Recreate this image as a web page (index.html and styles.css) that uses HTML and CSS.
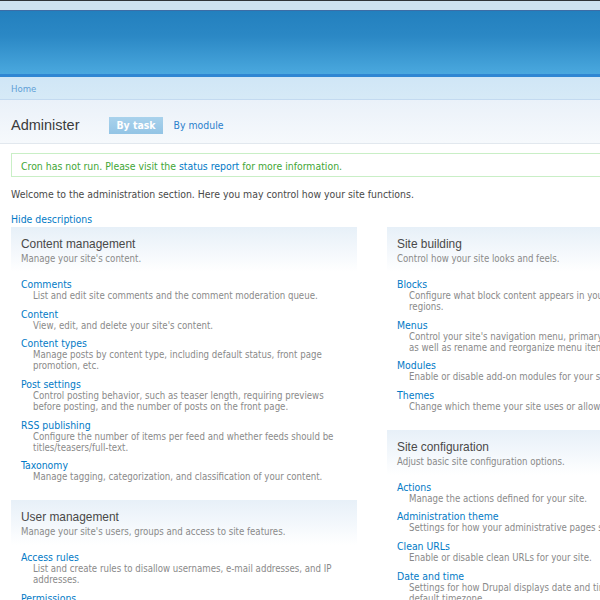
FILE: index.html
```html
<!DOCTYPE html>
<html>
<head>
<meta charset="utf-8">
<title>Administer</title>
<link rel="stylesheet" href="styles.css">
</head>
<body>
<div class="page">
  <div class="topstrip"></div>
  <div class="header"></div>
  <div class="crumbs"><a href="#">Home</a></div>
  <div class="titlebar">
    <h2 class="title">Administer</h2>
    <ul class="tabs">
      <li class="active"><a href="#">By task</a></li>
      <li><a href="#">By module</a></li>
    </ul>
  </div>
  <div class="content">
    <div class="messages">Cron has not run. Please visit the <a href="#">status report</a> for more information.</div>
    <p class="welcome">Welcome to the administration section. Here you may control how your site functions.</p>
    <p class="compact"><a href="#">Hide descriptions</a></p>
    <div class="columns">
      <div class="col">
        <div class="panel">
          <h3>Content management</h3>
          <div class="desc">Manage your site's content.</div>
          <dl>
            <dt><a href="#">Comments</a></dt>
            <dd>List and edit site comments and the comment moderation queue.</dd>
            <dt><a href="#">Content</a></dt>
            <dd>View, edit, and delete your site's content.</dd>
            <dt><a href="#">Content types</a></dt>
            <dd>Manage posts by content type, including default status, front page promotion, etc.</dd>
            <dt><a href="#">Post settings</a></dt>
            <dd>Control posting behavior, such as teaser length, requiring previews before posting, and the number of posts on the front page.</dd>
            <dt><a href="#">RSS publishing</a></dt>
            <dd>Configure the number of items per feed and whether feeds should be titles/teasers/full-text.</dd>
            <dt><a href="#">Taxonomy</a></dt>
            <dd>Manage tagging, categorization, and classification of your content.</dd>
          </dl>
        </div>
        <div class="panel">
          <h3>User management</h3>
          <div class="desc">Manage your site's users, groups and access to site features.</div>
          <dl>
            <dt><a href="#">Access rules</a></dt>
            <dd>List and create rules to disallow usernames, e-mail addresses, and IP addresses.</dd>
            <dt><a href="#">Permissions</a></dt>
            <dd>Determine access to features by selecting permissions for roles.</dd>
          </dl>
        </div>
      </div>
      <div class="col">
        <div class="panel">
          <h3>Site building</h3>
          <div class="desc">Control how your site looks and feels.</div>
          <dl>
            <dt><a href="#">Blocks</a></dt>
            <dd>Configure what block content appears in your site's sidebars and other regions.</dd>
            <dt><a href="#">Menus</a></dt>
            <dd>Control your site's navigation menu, primary links and secondary links, as well as rename and reorganize menu items.</dd>
            <dt><a href="#">Modules</a></dt>
            <dd>Enable or disable add-on modules for your site.</dd>
            <dt><a href="#">Themes</a></dt>
            <dd>Change which theme your site uses or allows users to set.</dd>
          </dl>
        </div>
        <div class="panel">
          <h3>Site configuration</h3>
          <div class="desc">Adjust basic site configuration options.</div>
          <dl>
            <dt><a href="#">Actions</a></dt>
            <dd>Manage the actions defined for your site.</dd>
            <dt><a href="#">Administration theme</a></dt>
            <dd>Settings for how your administrative pages should look.</dd>
            <dt><a href="#">Clean URLs</a></dt>
            <dd>Enable or disable clean URLs for your site.</dd>
            <dt><a href="#">Date and time</a></dt>
            <dd>Settings for how Drupal displays date and time, as well as the system's default timezone.</dd>
          </dl>
        </div>
      </div>
    </div>
  </div>
</div>
</body>
</html>
```
FILE: styles.css
```css
html, body {
  margin: 0;
  padding: 0;
  overflow: hidden;
  background: #fff;
}
body {
  font-family: "DejaVu Sans Condensed", "DejaVu Sans", sans-serif;
  font-size: 10.4px;
  color: #494949;
}
a {
  color: #027ac6;
  text-decoration: none;
}
.page {
  width: 754px;
}
.topstrip {
  height: 9px;
  border-top: 1px solid #2e3338;
  background: #cde2f0;
}
.header {
  height: 63px;
  border-top: 1px solid #3d6da6;
  border-bottom: 3px solid #2f86d3;
  background: linear-gradient(to bottom, #2380be 0%, #2b88c5 40%, #45a3da 90%, #4aa8df 100%);
}
.crumbs {
  height: 22px;
  line-height: 23px;
  padding-left: 11px;
  font-size: 9.5px;
  background: linear-gradient(to bottom, #d0e6f6, #d6eaf7);
  border-bottom: 1px solid #c3daf0;
}
.crumbs a {
  color: #5f9fd6;
}
.titlebar {
  height: 43px;
  display: flex;
  align-items: center;
  padding: 0 11px;
  background: linear-gradient(to bottom, #eaf1f9, #f6f9fc);
  border-bottom: 1px solid #e2e8ee;
}
.title {
  margin: 0 29px 0 0;
  font-family: "Liberation Sans", Arial, sans-serif;
  font-weight: normal;
  font-size: 14.5px;
  color: #3b3b3b;
  position: relative;
  top: 3px;
}
.tabs {
  list-style: none;
  margin: 0;
  padding: 0;
  display: flex;
  position: relative;
  top: 4px;
}
.tabs li a {
  display: block;
  height: 17px;
  line-height: 17px;
  padding: 0 11px;
  font-size: 10.4px;
  color: #2a80cc;
}
.tabs li.active a {
  background: linear-gradient(to bottom, #a9d2ec, #93c4e5);
  color: #fff;
  font-weight: bold;
  padding: 0 7px 0 8px;
}
.content {
  padding: 9px 11px 0;
}
.messages {
  border: 1px solid #c9efc6;
  height: 22px;
  line-height: 24px;
  padding-left: 9px;
  color: #3fa636;
}
.welcome {
  margin: 10px 0 0;
  line-height: 14px;
}
.compact {
  margin: 12px 0 0;
  line-height: 12px;
}
.columns {
  display: grid;
  grid-template-columns: 346px 356px;
  column-gap: 30px;
  align-items: start;
  margin-top: 2px;
}
.panel {
  padding: 10px 10px 4px;
  margin-bottom: 7px;
  background: linear-gradient(to bottom, #e7f0f8 0px, #f4f8fc 25px, #ffffff 45px);
}
.panel h3 {
  margin: 0;
  font-family: "Liberation Sans", Arial, sans-serif;
  font-weight: normal;
  font-size: 11.9px;
  line-height: 15px;
  color: #494949;
}
.panel .desc {
  font-size: 9.6px;
  line-height: 11px;
  margin-top: 1px;
  color: #8a8a8a;
}
.panel dl {
  margin: 14px 0 0;
}
.panel dt {
  line-height: 12px;
}
.panel dd {
  margin: 0 8px 6.7px 12px;
  font-size: 9.6px;
  line-height: 11px;
  color: #8a8a8a;
}
```
